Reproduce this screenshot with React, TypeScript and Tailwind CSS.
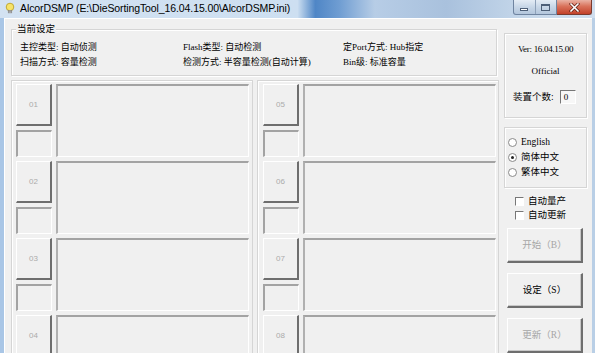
import React from "react";

const cjk = "font-['Liberation_Serif','Noto_Sans_CJK_SC',serif]";

const Bulb: React.FC = () => (
  <svg width="10" height="13" viewBox="0 0 10 13" className="shrink-0">
    <circle cx="5" cy="5" r="3.8" fill="#f6e36a" stroke="#b59a1c" strokeWidth="0.8" />
    <rect x="3.2" y="8.3" width="3.6" height="2.6" fill="#c9c9c9" stroke="#777" strokeWidth="0.5" />
    <line x1="3.2" y1="9.6" x2="6.8" y2="9.6" stroke="#777" strokeWidth="0.5" />
  </svg>
);

const TitleBar: React.FC = () => (
  <div className="h-[18px] shrink-0 flex items-start bg-[linear-gradient(90deg,#d3e2f2_0%,#cddff1_50%,#4f86c6_53%,#6f9dd2_57%,#b7cde6_63%,#a9c1dd_75%,#c5d7ea_88%,#d0deee_100%)]">
    <div className="flex items-center gap-[5px] pl-[5px] pt-[2px] h-[15px]">
      <Bulb />
      <span className="font-['Liberation_Sans',sans-serif] text-[10.5px] leading-[13px] text-black tracking-[-0.1px] whitespace-nowrap">
        AlcorDSMP (E:\DieSortingTool_16.04.15.00\AlcorDSMP.ini)
      </span>
    </div>
    <div className="ml-auto mr-[3px] flex h-[15px]">
      <div className="w-[44px] h-[15px] flex border border-t-0 border-[#6f84a0] rounded-bl-[3px] bg-[linear-gradient(180deg,#e4ecf5_0%,#c7d6e7_50%,#b3c6dc_100%)]">
        <div className="flex-1 flex items-center justify-center border-r border-[#8ea1b9]">
          <div className="w-[8px] h-[3px] bg-white border border-[#4d5f78] mt-[4px]" />
        </div>
        <div className="flex-1 flex items-center justify-center">
          <div className="w-[9px] h-[7px] border border-[#4d5f78] border-t-2 bg-transparent" />
        </div>
      </div>
      <div className="w-[35px] h-[15px] flex items-center justify-center border border-t-0 border-l-0 border-[#7a3a2e] rounded-br-[3px] bg-[linear-gradient(180deg,#eab2a4_0%,#d9725b_45%,#c2412a_100%)]">
        <svg width="11" height="9" viewBox="0 0 11 9">
          <path d="M2 1 L9 8 M9 1 L2 8" stroke="#5b1a10" strokeWidth="3" strokeLinecap="square" />
          <path d="M2 1 L9 8 M9 1 L2 8" stroke="#ffffff" strokeWidth="1.6" strokeLinecap="square" />
        </svg>
      </div>
    </div>
  </div>
);

const Slot: React.FC<{ n: string }> = ({ n }) => (
  <div className="flex gap-[4px] shrink-0">
    <div className="flex flex-col gap-[4px] w-[36px]">
      <div className="h-[42px] flex items-center justify-center border-t border-l border-white border-r-2 border-b-2 border-r-[#6e6e6e] border-b-[#6e6e6e] font-['Liberation_Sans',sans-serif] text-[8px] text-[#ababab]">
        {n}
      </div>
      <div className="h-[27px] border-t-2 border-l-2 border-t-[#a3a3a3] border-l-[#a3a3a3] border-r border-b border-r-white border-b-white" />
    </div>
    <div className="w-[193px] h-[73px] border-t-2 border-l-2 border-t-[#a3a3a3] border-l-[#b0b0b0] border-r border-b border-r-white border-b-white" />
  </div>
);

const Column: React.FC<{ nums: string[]; pl: string }> = ({ nums, pl }) => (
  <div className={`w-[242px] h-[310px] shrink-0 border border-[#d5d5d5] shadow-[inset_1px_1px_0_#fff] flex flex-col gap-[4px] pt-[3px] ${pl}`}>
    {nums.map((n) => (
      <Slot key={n} n={n} />
    ))}
  </div>
);

const Radio: React.FC<{ label: string; checked?: boolean }> = ({ label, checked }) => (
  <div className="flex items-center gap-[4px] h-[15px]">
    <div className="w-[9px] h-[9px] rounded-full border border-[#8a8a8a] bg-white flex items-center justify-center">
      {checked && <div className="w-[3px] h-[3px] rounded-full bg-[#222]" />}
    </div>
    <span className={`${cjk} text-[9.5px] text-black`}>{label}</span>
  </div>
);

const Check: React.FC<{ label: string }> = ({ label }) => (
  <div className="flex items-center gap-[4px] h-[14px]">
    <div className="w-[9px] h-[9px] border-t border-l border-[#777] border-r border-b border-r-white border-b-white bg-white" />
    <span className={`${cjk} text-[9.5px] text-black`}>{label}</span>
  </div>
);

const Btn: React.FC<{ label: string; disabled?: boolean }> = ({ label, disabled }) => (
  <div
    className={`w-[76px] h-[35px] shrink-0 flex items-center justify-center border-t border-l border-white border-r-2 border-b-2 border-r-[#6e6e6e] border-b-[#6e6e6e] shadow-[inset_-1px_-1px_0_#c8c8c8] ${cjk} text-[9.5px] ${
      disabled ? "text-[#a6a6a6]" : "text-black"
    }`}
  >
    {label}
  </div>
);

export default function App() {
  return (
    <div className="w-[595px] h-[353px] overflow-hidden bg-[#f0f0f0] flex flex-col">
      <TitleBar />
      <div className="flex-1 min-h-0 flex border-l-[4px] border-r-[3px] border-l-[#a9c6e6] border-r-[#b9cfe6]">
        <div className="flex-1 flex bg-[#f0f0f0] border-l border-t border-white pl-[6px]">
          <div className="w-[488px] shrink-0 flex flex-col pt-[10px]">
            <div className={`relative h-[47px] w-[486px] shrink-0 border border-[#d5d5d5] shadow-[inset_1px_1px_0_#fff,1px_1px_0_#fff] ${cjk} text-[9px] text-black`}>
              <span className="absolute left-[4px] top-[-7px] bg-[#f0f0f0] px-[1px] leading-[13px] text-[9.5px]">当前设定</span>
              <div className="grid grid-cols-[163px_160px_1fr] pl-[8px] pt-[10px] leading-[15px] whitespace-nowrap">
                <span>主控类型: 自动侦测</span>
                <span>Flash类型: 自动检测</span>
                <span>定Port方式: Hub指定</span>
                <span>扫描方式: 容量检测</span>
                <span>检测方式: 半容量检测(自动计算)</span>
                <span>Bin级: 标准容量</span>
              </div>
            </div>
            <div className="flex gap-[4px] mt-[4px] shrink-0">
              <Column nums={["01", "02", "03", "04"]} pl="pl-[4px]" />
              <Column nums={["05", "06", "07", "08"]} pl="pl-[5px]" />
            </div>
          </div>
          <div className="w-[83px] shrink-0 ml-[5px] flex flex-col pt-[14px]">
            <div className="h-[85px] shrink-0 border border-[#d5d5d5] shadow-[inset_1px_1px_0_#fff,1px_1px_0_#fff] flex flex-col items-center pt-[8px] text-black">
              <span className="font-['Liberation_Serif',serif] text-[9px] leading-[14px] tracking-[-0.3px]">Ver: 16.04.15.00</span>
              <span className="font-['Liberation_Serif',serif] text-[9px] leading-[14px] mt-[8px]">Official</span>
              <div className="flex items-center gap-[6px] mt-[12px] self-start pl-[8px]">
                <span className={`${cjk} text-[9.5px]`}>装置个数:</span>
                <div className="w-[16px] h-[14px] border-t border-l border-[#777] border-r border-b border-r-white border-b-white bg-[#f7f7f7] font-['Liberation_Serif',serif] text-[9px] leading-[12px] pl-[3px]">
                  0
                </div>
              </div>
            </div>
            <div className="h-[61px] shrink-0 mt-[9px] border border-[#d5d5d5] shadow-[inset_1px_1px_0_#fff,1px_1px_0_#fff] flex flex-col pt-[7px] pl-[3px]">
              <Radio label="English" />
              <Radio label="简体中文" checked />
              <Radio label="繁体中文" />
            </div>
            <div className="flex flex-col mt-[6px] pl-[11px] shrink-0">
              <Check label="自动量产" />
              <Check label="自动更新" />
            </div>
            <div className="flex flex-col gap-[10px] mt-[6px] pl-[3px] shrink-0">
              <Btn label="开始（B）" disabled />
              <Btn label="设定（S）" />
              <Btn label="更新（R）" disabled />
            </div>
          </div>
        </div>
      </div>
    </div>
  );
}
